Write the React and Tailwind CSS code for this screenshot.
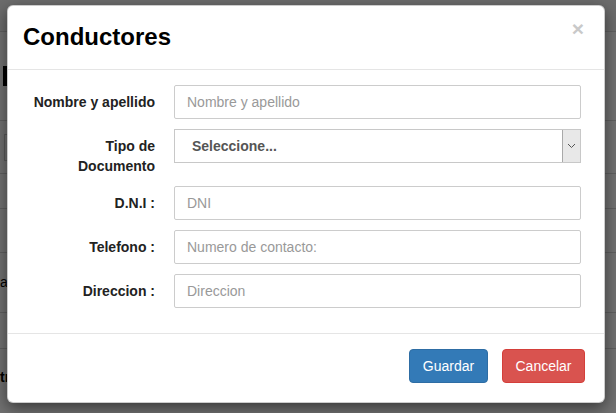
import React from 'react';

const font = { fontFamily: '"Liberation Sans", Arial, sans-serif' };

// filas del formulario
const campos = [
  { label: 'Nombre y apellido', placeholder: 'Nombre y apellido' },
  { label: 'Tipo de Documento', select: true },
  { label: 'D.N.I :', placeholder: 'DNI' },
  { label: 'Telefono :', placeholder: 'Numero de contacto:' },
  { label: 'Direccion :', placeholder: 'Direccion' },
];

const Fondo = () => (
  <div className="w-full h-full flex flex-col bg-[#717171]">
    <div className="h-[32px] border-b border-[#5f5f5f] bg-[#6c6c6c]" />
    <div className="h-[88px] flex items-center">
      <div className="w-[4px] h-[20px] ml-[3px] bg-black" />
    </div>
    <div className="h-[53px] border-t border-[#5f5f5f] flex items-center">
      <div className="w-[10px] h-[27px] ml-[4px] border border-[#5a5a5a]" />
    </div>
    <div className="h-[35px] border-t border-[#5f5f5f]" />
    <div className="h-[44px] border-t border-[#5f5f5f]" />
    <div className="h-[60px] border-t border-[#5f5f5f] flex items-center text-[14px] text-black">a</div>
    <div className="h-[36px] border-t border-[#5f5f5f]" />
    <div className="flex-1 border-t border-[#5f5f5f] pt-[18px] text-[14px] font-bold text-black">tr</div>
  </div>
);

const Campo = ({ c }) => (
  <div className="flex items-start mb-[10px]">
    <label className="w-[126px] ml-[21px] pt-[7px] text-right text-[14px] leading-[20px] font-bold text-[#222]">
      {c.label}
    </label>
    <div className="ml-[19px] w-[407px]">
      {c.select ? (
        <div className="h-[34px] flex border border-[#c8c8c8] bg-white">
          <div className="flex-1 flex items-center pl-[17px] text-[14px] font-bold text-[#555]">Seleccione...</div>
          <div className="w-[18px] flex items-center justify-center bg-[#e8e8e8] border-l border-[#a9a9a9]">
            <svg width="9" height="6" viewBox="0 0 9 6" fill="none">
              <path d="M1 1l3.5 3.5L8 1" stroke="#555" strokeWidth="1" />
            </svg>
          </div>
        </div>
      ) : (
        <input
          className="w-full h-[34px] px-[12px] border border-[#ccc] rounded-[2px] text-[14px] text-[#555] placeholder:text-[#999] outline-none"
          placeholder={c.placeholder}
          style={font}
        />
      )}
    </div>
  </div>
);

export default function App() {
  return (
    <div className="relative w-[616px] h-[413px] overflow-hidden" style={font}>
      <Fondo />
      <div className="absolute left-[7px] top-[5px] w-[598px] h-[398px] bg-white border border-black/20 rounded-[6px] shadow-[0_5px_15px_rgba(0,0,0,0.5)] flex flex-col">
        {/* cabecera */}
        <div className="h-[64px] flex items-start justify-between px-[15px] border-b border-[#e5e5e5]">
          <h4 className="mt-[18px] text-[24px] leading-[26px] font-bold text-black">Conductores</h4>
          <span className="mt-[12px] mr-[5px] text-[21px] leading-[21px] font-bold text-[#c9c9c9]">×</span>
        </div>
        {/* cuerpo */}
        <div className="pt-[15px] pb-[15px] border-b border-[#e5e5e5]">
          {campos.map((c) => (
            <Campo key={c.label} c={c} />
          ))}
        </div>
        {/* pie */}
        <div className="flex justify-end gap-[14px] pt-[15px] pr-[19px]">
          <button className="w-[79px] h-[34px] rounded-[4px] bg-[#337ab7] border border-[#2e6da4] text-white text-[14px]">
            Guardar
          </button>
          <button className="w-[83px] h-[34px] rounded-[4px] bg-[#d9534f] border border-[#d43f3a] text-white text-[14px]">
            Cancelar
          </button>
        </div>
      </div>
    </div>
  );
}
